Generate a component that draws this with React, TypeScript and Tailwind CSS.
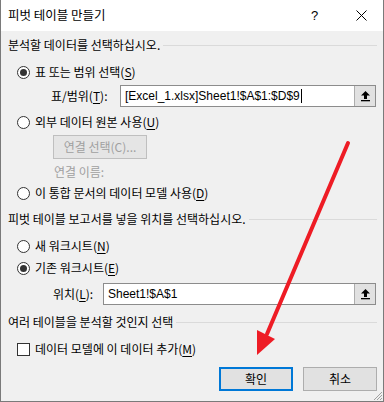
import React from "react";

const U = ({ c }: { c: string }) => (
  <span className="underline underline-offset-[2px] decoration-1">{c}</span>
);

const latin = { fontFamily: '"Liberation Sans", "Noto Sans CJK KR", sans-serif' };

function Radio({ checked }: { checked?: boolean }) {
  return (
    <span className="w-[13px] h-[13px] shrink-0 rounded-full border border-[#333333] bg-white flex items-center justify-center">
      {checked && <span className="w-[7px] h-[7px] rounded-full bg-[#333333]" />}
    </span>
  );
}

function Section({ text }: { text: string }) {
  return (
    <div className="h-[24px] flex items-center pl-[7px] pr-[6px] gap-[3px]">
      <span className="whitespace-nowrap">{text}</span>
      <div className="flex-1 h-px bg-[#dadada]" />
    </div>
  );
}

function PickBtn() {
  return (
    <div className="w-[21px] h-full bg-[#e1e1e1] border-l border-[#adadad] flex items-center justify-center">
      <svg width="11" height="12" viewBox="0 0 11 12">
        <path d="M5.5 1 L10 5.5 L7 5.5 L7 9 L4 9 L4 5.5 L1 5.5 Z" fill="#000" />
        <rect x="1" y="10" width="9" height="1.3" fill="#000" />
      </svg>
    </div>
  );
}

export default function App() {
  return (
    <div
      className="relative w-[384px] h-[402px] bg-[#f0f0f0] border-l border-r border-b border-[#7a7a7a] text-[12px] leading-none text-black overflow-hidden"
      style={{ fontFamily: '"Noto Sans CJK KR", "Noto Sans", sans-serif' }}
    >
      {/* Title bar */}
      <div className="h-[31px] bg-white flex items-center pl-[7px] relative">
        <span className="text-[12.5px]">피벗 테이블 만들기</span>
        <span className="absolute left-[310px] top-[9px] text-[13px]" style={{ fontFamily: '"Liberation Sans", sans-serif' }}>?</span>
        <svg className="absolute left-[355px] top-[10px]" width="11" height="11" viewBox="0 0 11 11">
          <path d="M0.5 0.5 L10.5 10.5 M10.5 0.5 L0.5 10.5" stroke="#000" strokeWidth="1" />
        </svg>
      </div>

      <div className="mt-[2px]">
        <Section text="분석할 데이터를 선택하십시오." />
      </div>

      <div className="mt-[4px] h-[22px] flex items-center pl-[16px] gap-[5px]">
        <Radio checked />
        <span>
          표 또는 범위 선택(<U c="S" />)
        </span>
      </div>

      <div className="mt-[2px] h-[22px] flex items-center pl-[50px] pr-[7px]">
        <span className="w-[69px]">
          표/범위(<U c="T" />):
        </span>
        <div className="flex-1 h-full bg-white border border-[#8c8c8c] flex items-stretch">
          <div className="flex-1 flex items-center pl-[4px]" style={latin}>
            <span>[Excel_1.xlsx]Sheet1!$A$1:$D$9</span>
            <span className="w-px h-[14px] bg-black ml-[1px]" />
          </div>
          <PickBtn />
        </div>
      </div>

      <div className="mt-[4px] h-[22px] flex items-center pl-[16px] gap-[5px]">
        <Radio />
        <span>
          외부 데이터 원본 사용(<U c="U" />)
        </span>
      </div>

      <div className="mt-[2px] pl-[52px]">
        <div className="w-[94px] h-[24px] border border-[#bfbfbf] bg-[#e5e5e5] flex items-center justify-center text-[#a0a0a0]">
          연결 선택(C)...
        </div>
      </div>

      <div className="mt-[4px] h-[18px] flex items-center pl-[53px] text-[#a0a0a0]">연결 이름:</div>

      <div className="mt-[1px] h-[22px] flex items-center pl-[16px] gap-[5px]">
        <Radio />
        <span>
          이 통합 문서의 데이터 모델 사용(<U c="D" />)
        </span>
      </div>

      <div className="mt-[3px]">
        <Section text="피벗 테이블 보고서를 넣을 위치를 선택하십시오." />
      </div>

      <div className="mt-[4px] h-[22px] flex items-center pl-[16px] gap-[5px]">
        <Radio />
        <span>
          새 워크시트(<U c="N" />)
        </span>
      </div>

      <div className="h-[22px] flex items-center pl-[16px] gap-[5px]">
        <Radio checked />
        <span>
          기존 워크시트(<U c="E" />)
        </span>
      </div>

      <div className="mt-[4px] h-[22px] flex items-center pl-[52px] pr-[7px]">
        <span className="w-[50px]">
          위치(<U c="L" />):
        </span>
        <div className="flex-1 h-full bg-white border border-[#8c8c8c] flex items-stretch">
          <div className="flex-1 flex items-center pl-[4px]" style={latin}>Sheet1!$A$1</div>
          <PickBtn />
        </div>
      </div>

      <div className="mt-[5px]">
        <Section text="여러 테이블을 분석할 것인지 선택" />
      </div>

      <div className="mt-[4px] h-[22px] flex items-center pl-[16px] gap-[5px]">
        <span className="w-[13px] h-[13px] shrink-0 border border-[#333333] bg-white" />
        <span>
          데이터 모델에 이 데이터 추가(<U c="M" />)
        </span>
      </div>

      <div className="mt-[7px] flex justify-end gap-[10px] pr-[6px]">
        <div className="w-[74px] h-[24px] border-2 border-[#0078d7] bg-[#e1e1e1] flex items-center justify-center">확인</div>
        <div className="w-[74px] h-[24px] border border-[#adadad] bg-[#e1e1e1] flex items-center justify-center">취소</div>
      </div>

      {/* resize grip */}
      <svg className="absolute right-0 bottom-0" width="12" height="12" viewBox="0 0 12 12">
        <path d="M11 3 L3 11 M11 6 L6 11 M11 9 L9 11" stroke="#a0a0a0" strokeWidth="1" />
      </svg>

      {/* red arrow overlay */}
      <svg className="absolute left-0 top-0 pointer-events-none" width="384" height="402" viewBox="0 0 384 402">
        <line x1="347" y1="143" x2="266" y2="334" stroke="#ee1c25" strokeWidth="4" strokeLinecap="round" />
        <polygon points="256,355 256,330 274,339" fill="#ee1c25" />
      </svg>
    </div>
  );
}
